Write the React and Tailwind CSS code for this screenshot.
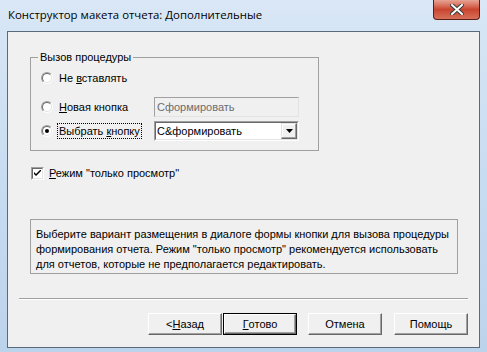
import React from "react";

const F = { fontFamily: '"Liberation Sans", Arial, sans-serif' };

function Radio({ checked }) {
  return (
    <div className="w-[12px] h-[12px] rounded-full border border-t-[#a0a0a0] border-l-[#a0a0a0] border-r-white border-b-white shrink-0">
      <div className="w-full h-full rounded-full border border-t-[#696969] border-l-[#696969] border-r-[#e3e3e3] border-b-[#e3e3e3] bg-white flex items-center justify-center">
        {checked && <div className="w-[4px] h-[4px] rounded-full bg-black" />}
      </div>
    </div>
  );
}

function Btn({ children, def }) {
  return (
    <div className={"w-[74px] h-[22px] " + (def ? "border border-black" : "")}>
      <div className="w-full h-full border border-t-white border-l-white border-r-[#696969] border-b-[#696969] shadow-[inset_-1px_-1px_0_#a0a0a0] bg-[#f0f0f0] flex items-center justify-center text-[11px] text-black">
        {children}
      </div>
    </div>
  );
}

export default function App() {
  return (
    <div className="w-[487px] h-[352px] flex flex-col bg-gradient-to-b from-[#d9e7f6] via-[#c8dcf1] to-[#bcd3ec] overflow-hidden" style={F}>
      <div className="h-[31px] shrink-0 flex items-start justify-between pl-[8px] pr-[7px]">
        <div className="pt-[7px] text-[11.4px] text-black leading-[16px]" style={{ fontFamily: '"Open Sans", "Noto Sans", sans-serif' }}>
          Конструктор макета отчета: Дополнительные
        </div>
        <div className="w-[47px] h-[20px] rounded-b-[4px] border border-t-0 border-[#5a1e16] bg-gradient-to-b from-[#e7a494] via-[#c9452f] to-[#d7705a] flex items-center justify-center">
          <svg width="14" height="11" viewBox="0 0 14 11">
            <path d="M2 1 L12 10 M12 1 L2 10" stroke="#3a3a3a" strokeWidth="4" strokeLinecap="square" />
            <path d="M2 1 L12 10 M12 1 L2 10" stroke="#ffffff" strokeWidth="2" strokeLinecap="square" />
          </svg>
        </div>
      </div>
      <div className="mx-[7px] mb-[4px] flex-1 border border-[#5a6a7c] bg-[#f0f0f0] flex flex-col text-[11px] text-black">
        <div className="pl-[22px] pt-[25px] flex flex-col">
          <div className="relative w-[289px] h-[94px] border border-[#a0a0a0]">
            <div className="absolute left-[7px] top-[-8px] bg-[#f0f0f0] px-[2px] leading-[14px]">Вызов процедуры</div>
            <div className="flex flex-col pl-[10px] pt-[14px]">
              <div className="flex items-center h-[12px]">
                <Radio />
                <span className="ml-[6px]">Не <u>в</u>ставлять</span>
              </div>
              <div className="flex items-center mt-[13px] h-[20px]">
                <Radio />
                <span className="ml-[6px] w-[95px]"><u>Н</u>овая кнопка</span>
                <div className="w-[145px] h-[20px] border border-t-[#a0a0a0] border-l-[#a0a0a0] border-r-[#e3e3e3] border-b-[#e3e3e3] bg-[#f0f0f0] flex items-center pl-[2px] text-[#6d6d6d]">
                  Сформировать
                </div>
              </div>
              <div className="flex items-center mt-[4px] h-[20px]">
                <Radio checked />
                <span className="ml-[4px] w-[97px]">
                  <span className="border border-dotted border-black px-[1px] py-[1px]">Выбрать <u>к</u>нопку</span>
                </span>
                <div className="w-[145px] h-[20px] border border-t-[#a0a0a0] border-l-[#a0a0a0] border-r-white border-b-white">
                  <div className="w-full h-full border border-t-[#696969] border-l-[#696969] border-r-[#e3e3e3] border-b-[#e3e3e3] bg-white flex items-center">
                    <span className="flex-1 pl-[1px]">С&amp;формировать</span>
                    <div className="w-[16px] h-[16px] border border-t-[#e3e3e3] border-l-[#e3e3e3] border-r-[#696969] border-b-[#696969] shadow-[inset_-1px_-1px_0_#a0a0a0,inset_1px_1px_0_#ffffff] bg-[#f0f0f0] flex items-center justify-center">
                      <svg width="7" height="4" viewBox="0 0 7 4"><path d="M0 0 H7 L3.5 4 Z" fill="#000" /></svg>
                    </div>
                  </div>
                </div>
              </div>
            </div>
          </div>
          <div className="flex items-center mt-[16px] ml-[1px] h-[13px]">
            <div className="w-[13px] h-[13px] border border-t-[#a0a0a0] border-l-[#a0a0a0] border-r-white border-b-white shrink-0">
              <div className="w-full h-full border border-t-[#696969] border-l-[#696969] border-r-[#e3e3e3] border-b-[#e3e3e3] bg-white flex items-center justify-center">
                <svg width="7" height="7" viewBox="0 0 7 7"><path d="M0 2 L0 4 L2 6 L7 1 L7 -1 L2 4 Z" fill="#000" /></svg>
              </div>
            </div>
            <span className="ml-[5px]"><u>Р</u>ежим "только просмотр"</span>
          </div>
          <div className="mt-[39px] w-[428px] h-[55px] border border-[#a0a0a0] pl-[5px] pt-[7px] leading-[15px]">
            Выберите вариант размещения в диалоге формы кнопки для вызова процедуры формирования отчета. Режим "только просмотр" рекомендуется использовать для отчетов, которые не предполагается редактировать.
          </div>
        </div>
        <div className="mx-[11px] mt-[24px] border-t border-t-[#a0a0a0] border-b border-b-white" />
        <div className="flex mt-[13px] pl-[140px]">
          <Btn>&lt;<u>Н</u>азад</Btn>
          <div className="ml-[1px]"><Btn def><u>Г</u>отово</Btn></div>
          <div className="ml-[11px]"><Btn>Отмена</Btn></div>
          <div className="ml-[12px]"><Btn>Помощь</Btn></div>
        </div>
      </div>
    </div>
  );
}
